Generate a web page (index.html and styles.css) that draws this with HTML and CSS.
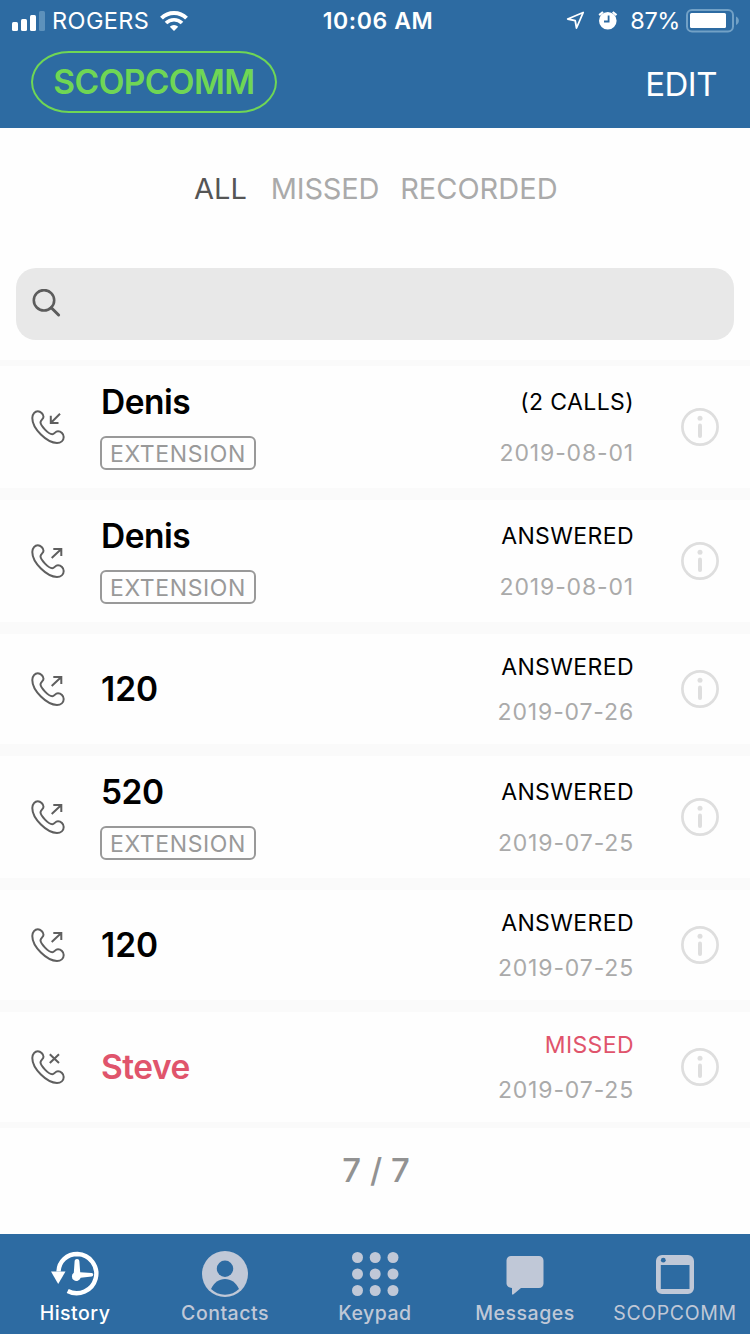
FILE: index.html
```html
<!DOCTYPE html>
<html lang="en">
<head>
  <meta charset="UTF-8" />
  <meta name="viewport" content="width=device-width, initial-scale=1.0" />
  <title>History</title>
  <link rel="stylesheet" href="styles.css">
</head>
<body>
  <!-- Shared icons -->
  <svg class="sprite" width="0" height="0">
    <symbol id="phone" viewBox="0 0 34 34">
      <path d="M1.300 8C1.300 4 4 1.200 6.800 1.200c2.700 0 5.700 3 5.700 5.500 0 2.500-3 3.300-3 5.600C9.500 15.300 17 24.200 21.300 24.200c2.300 0 2.700-3 5.700-3s5.700 2.800 5.700 5.700c0 3.500-2.900 6-6.700 6C16 32.900 1.300 18.800 1.300 8z"/>
    </symbol>
    <symbol id="info" viewBox="0 0 38 38">
      <circle cx="19" cy="19" r="17.600" fill="none" stroke="#dedede" stroke-width="2.700"/>
      <circle cx="19" cy="10.300" r="2.500" fill="#dedede"/>
      <path d="M19 17.500v10.500" stroke="#dedede" stroke-width="4" stroke-linecap="round"/>
    </symbol>
  </svg>

  <header class="header">
    <div class="status-bar">
      <div class="status-left">
        <svg width="33" height="20" viewBox="0 0 33 20">
          <rect x="0" y="11" width="6" height="9" rx="1.500" fill="#fff"/>
          <rect x="9" y="8" width="6" height="12" rx="1.500" fill="#fff"/>
          <rect x="18" y="4" width="6" height="16" rx="1.500" fill="#fff"/>
          <rect x="27" y="0" width="6" height="20" rx="1.500" fill="#5d91bb"/>
        </svg>
        <span class="carrier">ROGERS</span>
        <svg width="28" height="20" viewBox="0 0 28 20">
          <path d="M1.500 7.200a17.700 17.700 0 0 1 25 0" fill="none" stroke="#fff" stroke-width="4"/>
          <path d="M6 12a11.300 11.300 0 0 1 16 0" fill="none" stroke="#fff" stroke-width="3.600"/>
          <path d="M14 20l-4.200-4.200a6 6 0 0 1 8.400 0z" fill="#fff"/>
        </svg>
      </div>
      <div class="time">10:06 AM</div>
      <div class="status-right">
        <svg width="19" height="19" viewBox="0 0 19 19">
          <path d="M17.200 1.500L1.700 8l7.500 1.700 1.300 7.300z" fill="none" stroke="#fff" stroke-width="1.800" stroke-linejoin="round"/>
        </svg>
        <svg class="alarm" width="20" height="19" viewBox="0 0 20 19">
          <circle cx="9.800" cy="9.800" r="8.800" fill="#fff"/>
          <path d="M1.200 4.200L5 1M18.500 4.200L14.700 1" stroke="#fff" stroke-width="2.200"/>
          <path d="M10.600 4.500v6H6" fill="none" stroke="#2d6ba2" stroke-width="1.800"/>
        </svg>
        <span class="percent">87%</span>
        <svg width="53" height="24" viewBox="0 0 53 24">
          <rect x="1" y="1" width="46" height="21.500" rx="5" fill="none" stroke="#72a1c6" stroke-width="2"/>
          <rect x="4" y="4" width="36" height="15" rx="1.500" fill="#fff"/>
          <path d="M50 7.500c3.800 1.500 3.800 7 0 8.500z" fill="#72a1c6"/>
        </svg>
      </div>
    </div>
    <nav class="nav">
      <a class="brand">SCOPCOMM</a>
      <a class="edit">EDIT</a>
    </nav>
  </header>

  <main>
    <div class="filters">
      <a class="filter active">ALL</a>
      <a class="filter missed-filter">MISSED</a>
      <a class="filter">RECORDED</a>
    </div>

    <div class="search">
      <svg width="30" height="30" viewBox="0 0 30 30" fill="none" stroke="#5c5c5c">
        <circle cx="12" cy="11.300" r="10.200" stroke-width="2.600"/>
        <path d="M19.300 18.700l7.300 7.300" stroke-width="3" stroke-linecap="round"/>
      </svg>
    </div>

    <ul class="calls">
      <li class="call tall">
        <svg class="call-icon" viewBox="0 0 34 34"><use href="#phone"/><path d="M29 3.700L20 12.800M19.800 5.700V13H27.500"/></svg>
        <div class="who">
          <div class="name">Denis</div>
          <div class="tag">EXTENSION</div>
        </div>
        <div class="details">
          <div class="state">(2 CALLS)</div>
          <div class="date">2019-08-01</div>
        </div>
        <svg class="info"><use href="#info"/></svg>
      </li>
      <li class="call tall">
        <svg class="call-icon" viewBox="0 0 34 34"><use href="#phone"/><path d="M20.700 14L30 5.300M22.300 5H30.300V12"/></svg>
        <div class="who">
          <div class="name">Denis</div>
          <div class="tag">EXTENSION</div>
        </div>
        <div class="details">
          <div class="state">ANSWERED</div>
          <div class="date">2019-08-01</div>
        </div>
        <svg class="info"><use href="#info"/></svg>
      </li>
      <li class="call">
        <svg class="call-icon" viewBox="0 0 34 34"><use href="#phone"/><path d="M20.700 14L30 5.300M22.300 5H30.300V12"/></svg>
        <div class="who">
          <div class="name number">120</div>
        </div>
        <div class="details">
          <div class="state">ANSWERED</div>
          <div class="date">2019-07-26</div>
        </div>
        <svg class="info"><use href="#info"/></svg>
      </li>
      <li class="call tall">
        <svg class="call-icon" viewBox="0 0 34 34"><use href="#phone"/><path d="M20.700 14L30 5.300M22.300 5H30.300V12"/></svg>
        <div class="who">
          <div class="name">520</div>
          <div class="tag">EXTENSION</div>
        </div>
        <div class="details">
          <div class="state">ANSWERED</div>
          <div class="date">2019-07-25</div>
        </div>
        <svg class="info"><use href="#info"/></svg>
      </li>
      <li class="call">
        <svg class="call-icon" viewBox="0 0 34 34"><use href="#phone"/><path d="M20.700 14L30 5.300M22.300 5H30.300V12"/></svg>
        <div class="who">
          <div class="name number">120</div>
        </div>
        <div class="details">
          <div class="state">ANSWERED</div>
          <div class="date">2019-07-25</div>
        </div>
        <svg class="info"><use href="#info"/></svg>
      </li>
      <li class="call missed">
        <svg class="call-icon" viewBox="0 0 34 34"><use href="#phone"/><path d="M18.800 4.200L28 13M28 4.200L18.800 13"/></svg>
        <div class="who">
          <div class="name">Steve</div>
        </div>
        <div class="details">
          <div class="state">MISSED</div>
          <div class="date">2019-07-25</div>
        </div>
        <svg class="info"><use href="#info"/></svg>
      </li>
    </ul>

    <div class="pager">7 / 7</div>
  </main>

  <footer class="tabs">
    <a class="tab active">
      <svg width="50" height="46" viewBox="0 0 50 46">
        <path d="M8.500 20.500C9 10 17 3 27.500 3a19.600 19.600 0 1 1-9.800 37" fill="none" stroke="#fff" stroke-width="4.400"/>
        <path d="M1 20.500h14.500L8.200 33z" fill="#fff"/>
        <path d="M27 8c1.800 0 2.300 1 2.400 2.500l.8 10.700 11.500.9c2 .3 2 3 0 3.300l-11 1.300a4.500 4.500 0 1 1-6.900-5l.8-11.200C24.700 9 25.300 8 27 8z" fill="#fff"/>
      </svg>
      <span>History</span>
    </a>
    <a class="tab">
      <svg width="46" height="46" viewBox="0 0 46 46">
        <circle cx="23" cy="23" r="23" fill="#c0c8d7"/>
        <circle cx="23" cy="17.700" r="8.200" fill="#2d6ba2"/>
        <path d="M9 38c3-6.500 8-10 14-10s11 3.500 14 10c-3.500 3.500-8.500 5.700-14 5.700S12.500 41.500 9 38z" fill="#2d6ba2"/>
      </svg>
      <span>Contacts</span>
    </a>
    <a class="tab">
      <svg width="48" height="46" viewBox="0 0 48 46" fill="#c0c8d7">
        <circle cx="6.500" cy="6.500" r="5.500"/><circle cx="24.200" cy="6.500" r="5.500"/><circle cx="42" cy="6.500" r="5.500"/>
        <circle cx="6.500" cy="23" r="5.500"/><circle cx="24.200" cy="23" r="5.500"/><circle cx="42" cy="23" r="5.500"/>
        <circle cx="6.500" cy="39.500" r="5.500"/><circle cx="24.200" cy="39.500" r="5.500"/><circle cx="42" cy="39.500" r="5.500"/>
      </svg>
      <span>Keypad</span>
    </a>
    <a class="tab">
      <svg width="38" height="46" viewBox="0 0 38 46">
        <path d="M5 5h28a4.500 4.500 0 0 1 4.500 4.500v23a4.500 4.500 0 0 1-4.500 4.500H15l-7.500 6.300c-1 .8-1.500.2-1.500-.8V37c-3 0-5.500-2-5.500-4.500v-23A4.500 4.500 0 0 1 5 5z" fill="#c0c8d7"/>
      </svg>
      <span>Messages</span>
    </a>
    <a class="tab">
      <svg width="40" height="46" viewBox="0 0 40 46">
        <path fill-rule="evenodd" d="M7 4h26a6 6 0 0 1 6 6v27a6 6 0 0 1-6 6H7a6 6 0 0 1-6-6V10a6 6 0 0 1 6-6zM5.800 14v24h28.700V14z" fill="#c0c8d7"/>
        <circle cx="8.300" cy="9.200" r="2.400" fill="#2d6ba2"/>
      </svg>
      <span class="label-caps">SCOPCOMM</span>
    </a>
  </footer>
</body>
</html>
```
FILE: styles.css
```css
* { box-sizing: border-box; margin: 0; padding: 0; }
body {
  display: flex;
  flex-direction: column;
  height: 1334px;
  font-family: Inter, "Liberation Sans", sans-serif;
  background: #fefefe;
  color: #000;
  overflow: hidden;
}
svg {
  display: block;
  flex-shrink: 0;
}
.sprite {
  position: absolute;
}
.header {
  height: 128px;
  background: #2d6ba2;
  color: #fff;
}
.status-bar {
  display: grid;
  grid-template-columns: 1fr 130px 1fr;
  align-items: center;
  height: 41px;
  padding: 0 11px 0 12px;
  font-size: 23.5px;
  line-height: 40px;
}
.status-left, .status-right {
  display: flex;
  align-items: center;
}
.status-right {
  justify-content: flex-end;
}
.carrier {
  margin: 0 11px 0 7px;
  letter-spacing: 0.4px;
}
.time {
  text-align: center;
  font-weight: 600;
  font-size: 23px;
  letter-spacing: 0.6px;
  padding-left: 5px;
}
.alarm {
  margin: 0 12px 0 13px;
}
.percent {
  margin-right: 6px;
  letter-spacing: -0.4px;
}
.nav {
  display: flex;
  justify-content: space-between;
  align-items: flex-start;
  padding: 10px 33px 0 31px;
}
.brand {
  width: 246px;
  height: 62px;
  border: 2px solid #6fd655;
  border-radius: 38px / 31px;
  color: #6fd655;
  font-size: 33.5px;
  font-weight: 600;
  letter-spacing: -0.6px;
  line-height: 59px;
  text-align: center;
}
.edit {
  font-size: 33px;
  line-height: 66px;
  letter-spacing: -0.5px;
}
main {
  flex: 1;
}
.filters {
  display: flex;
  padding: 40px 0 0 194px;
  font-size: 29px;
  line-height: 42px;
  color: #aaa;
}
.filter.active {
  color: #555;
}
.missed-filter {
  margin: 0 21px 0 24px;
  letter-spacing: -0.2px;
}
.search {
  height: 72px;
  margin: 58px 16px 20px;
  padding: 21px 0 0 16px;
  border-radius: 20px;
  background: #e8e8e8;
}
.calls {
  list-style: none;
}
.call {
  display: flex;
  align-items: center;
  height: 122px;
  padding: 0 31px;
  border-top: 6px solid #fafafa;
  border-bottom: 6px solid #fafafa;
}
.call.tall {
  height: 134px;
}
.call-icon {
  width: 34px;
  height: 34px;
  fill: none;
  stroke: #5f5f5f;
  stroke-width: 2;
}
.who {
  flex: 1;
  padding-left: 35px;
}
.name {
  padding-left: 1px;
  font-size: 33.5px;
  font-weight: 600;
  letter-spacing: -0.5px;
  line-height: 40px;
}
.name.number {
  letter-spacing: 0;
}
.tall .who, .tall .details {
  height: 90px;
}
.tag {
  width: 156px;
  height: 34px;
  margin-top: 14px;
  border: 2px solid #999;
  border-radius: 6px;
  color: #999;
  font-size: 23px;
  letter-spacing: 0.6px;
  line-height: 32px;
  text-align: center;
}
.details {
  margin-right: 47px;
  text-align: right;
  font-size: 23px;
  letter-spacing: 0.4px;
  line-height: 34px;
}
.date {
  margin-top: 11px;
  color: #aaa;
  letter-spacing: 0.85px;
}
.tall .state {
  line-height: 40px;
}
.tall .date {
  margin-top: 14px;
}
.info {
  width: 38px;
  height: 38px;
}
.missed .name, .missed .state {
  color: #e0546c;
}
.pager {
  padding: 22px 0 0 2px;
  color: #929292;
  font-size: 33px;
  font-weight: 500;
  line-height: 40px;
  text-align: center;
}
.tabs {
  display: grid;
  grid-template-columns: repeat(5, 150px);
  height: 100px;
  background: #2d6ba2;
  color: #c0c8d7;
}
.tab {
  display: flex;
  flex-direction: column;
  align-items: center;
  padding-top: 17px;
  font-size: 19.5px;
  font-weight: 500;
  line-height: 33px;
  letter-spacing: 0.5px;
}
.tab.active {
  color: #fff;
}
.label-caps {
  font-weight: 400;
  letter-spacing: 0.6px;
}
```
